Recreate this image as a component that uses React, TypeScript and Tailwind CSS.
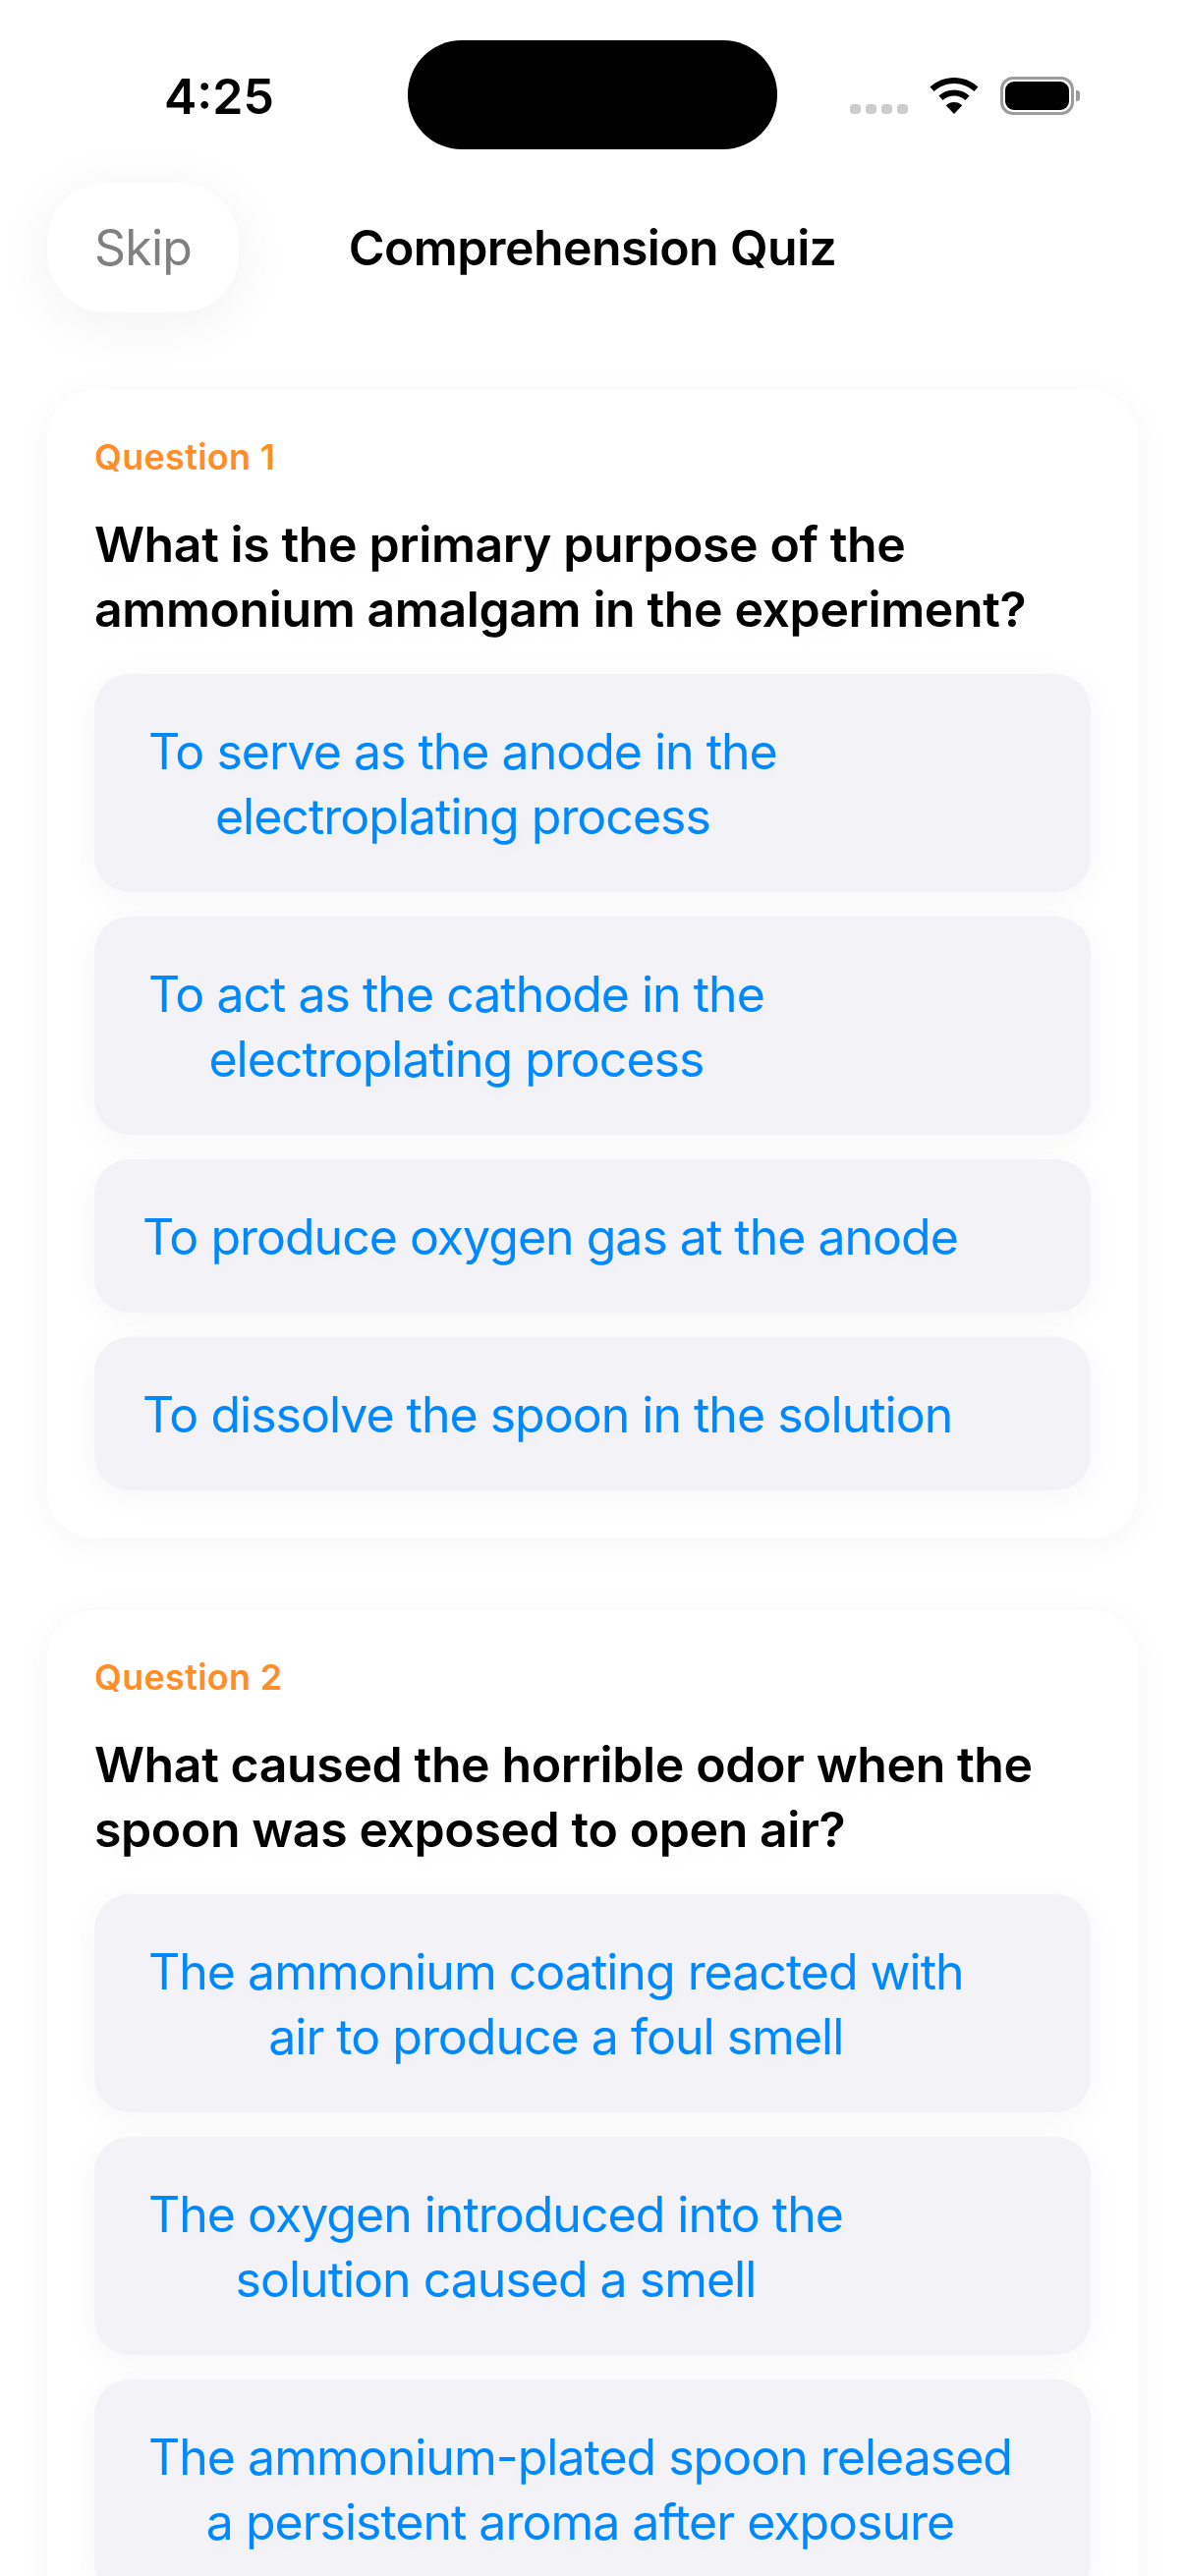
const questions = [
  {
    label: 'Question 1',
    text: ['What is the primary purpose of the', 'ammonium amalgam in the experiment?'],
    options: [
      ['To serve as the anode in the', 'electroplating process'],
      ['To act as the cathode in the', 'electroplating process'],
      ['To produce oxygen gas at the anode'],
      ['To dissolve the spoon in the solution'],
    ],
  },
  {
    label: 'Question 2',
    text: ['What caused the horrible odor when the', 'spoon was exposed to open air?'],
    options: [
      ['The ammonium coating reacted with', 'air to produce a foul smell'],
      ['The oxygen introduced into the', 'solution caused a smell'],
      ['The ammonium-plated spoon released', 'a persistent aroma after exposure'],
    ],
  },
];

const StatusIcons = () => (
  <div className="mt-[2px] ml-[74px] flex items-end h-[39px] shrink-0">
    <div className="flex gap-[5px] mb-[1px]">
      {[0, 1, 2, 3].map(i => (
        <div key={i} className="w-[11px] h-[10px] rounded-[4px] bg-[#cccccc]" />
      ))}
    </div>
    <svg className="ml-[22px] mb-[1px]" width="50" height="37" viewBox="0 0 50 37">
      <path d="M25 0C15.5 0 7 3.6 0.5 9.6L4.6 14C10 9 17.2 6 25 6s15 3 20.4 8l4.1-4.4C43 3.6 34.5 0 25 0z" fill="#000" />
      <path d="M25 12.5c-6 0-11.4 2.3-15.6 6.1l4.2 4.4c3-2.8 7-4.5 11.4-4.5s8.400 1.700 11.400 4.500l4.200-4.400C36.400 14.800 31 12.500 25 12.500z" fill="#000" />
      <path d="M25 25c-3.200 0-6.100 1.200-8.300 3.300L25 37l8.300-8.700C31.100 26.200 28.200 25 25 25z" fill="#000" />
    </svg>
    <div className="ml-[22px] flex items-center">
      <div className="w-[75px] h-[39px] rounded-[13px] border-[3px] border-[#9c9c9c] p-[2px]">
        <div className="w-full h-full rounded-[9px] bg-black" />
      </div>
      <div className="ml-[2px] w-[4px] h-[11px] rounded-r-[3px] bg-[#9c9c9c]" />
    </div>
  </div>
);

const Option = ({ lines }: { lines: string[] }) => (
  <div className={`rounded-[36px] bg-[#f2f2f7] shadow-[0_6px_36px_rgba(0,0,0,0.04)] text-[50px] leading-[66px] text-[#0088ff] tracking-[-1px] pt-[46px] pb-[44px] ${lines.length > 1 ? 'pl-[55px]' : 'pl-[49px]'}`}>
    <div className="w-fit text-center">
      {lines.map(l => (
        <div key={l} className="whitespace-nowrap">{l}</div>
      ))}
    </div>
  </div>
);

const QuestionCard = ({ label, text, options }: (typeof questions)[number]) => (
  <div className="rounded-[48px] bg-white shadow-[0_6px_36px_rgba(0,0,0,0.04)] [text-shadow:0_6px_36px_rgba(0,0,0,0.04)] px-[48px] pt-[46px] pb-[49px]">
    <div className="text-[36px] leading-[44px] font-semibold text-[#ff8d28] tracking-[0.3px]">{label}</div>
    <div className="mt-[34px] text-[50px] leading-[66px] font-semibold text-black tracking-[-0.4px]">
      {text.map(l => (
        <div key={l} className="whitespace-nowrap">{l}</div>
      ))}
    </div>
    <div className="mt-[33px] flex flex-col gap-[25px]">
      {options.map(o => (
        <Option key={o[0]} lines={o} />
      ))}
    </div>
  </div>
);

export default function App() {
  return (
    <div className="w-[1206px] h-[2622px] overflow-hidden bg-white font-['Inter',sans-serif]">
      <div className="flex items-center pt-[41px] pl-[167px]">
        <div className="mt-[2px] w-[108px] text-[50px] leading-[60px] font-semibold text-black">4:25</div>
        <div className="ml-[140px] w-[376px] h-[111px] rounded-[55px] bg-black" />
        <StatusIcons />
      </div>

      <div className="mt-[34px] flex items-center justify-between px-[48px]">
        <div className="flex items-center justify-center w-[195px] h-[132px] rounded-[60px] bg-white shadow-[0_10px_60px_rgba(0,0,0,0.06)] text-[50px] text-[#808080] tracking-[-0.75px]">
          Skip
        </div>
        <div className="text-[50px] leading-[62px] font-semibold text-black tracking-[-0.6px]">Comprehension Quiz</div>
        <div className="w-[195px]" />
      </div>

      <div className="mt-[79px] mx-[48px] flex flex-col gap-[73px]">
        {questions.map(q => (
          <QuestionCard key={q.label} {...q} />
        ))}
      </div>
    </div>
  );
}
